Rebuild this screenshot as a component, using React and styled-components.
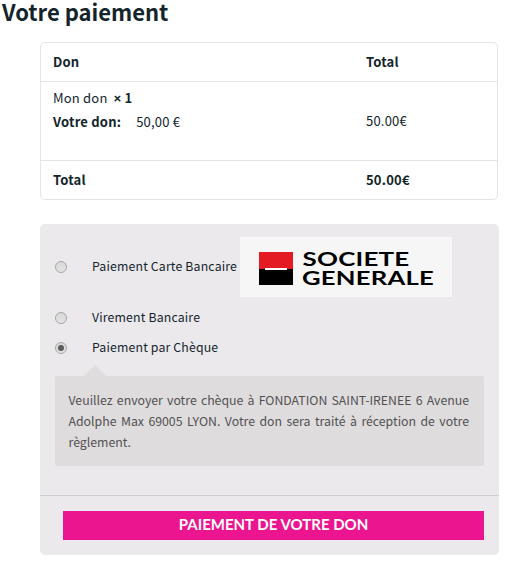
import React, { useState } from 'react'
import styled, { createGlobalStyle } from 'styled-components'

const GlobalStyle = createGlobalStyle`
  * {
    box-sizing: border-box;
  }
  body {
    margin: 0;
    background: #fff;
    color: #13242b;
    font-family: 'Noto Sans CJK SC', 'Noto Sans', sans-serif;
    font-size: 13px;
  }
`

const Page = styled.div`
  width: 507px;
  height: 563px;
`

const Title = styled.h3`
  height: 42px;
  margin: 0;
  padding-left: 2px;
  font-size: 22px;
  font-weight: bold;
  line-height: 22px;
`

const OrderTable = styled.div`
  width: 458px;
  height: 158px;
  margin: 0 0 24px 40px;
  border: 1px solid #e4e4e4;
  border-radius: 5px;
`

const OrderRow = styled.div`
  display: grid;
  grid-template-columns: 313px 1fr;
  align-items: center;
  height: ${props => props.$height}px;
  padding-left: 12px;
  border-top: ${props => (props.$first ? 'none' : '1px solid #e4e4e4')};
  font-weight: ${props => (props.$bold ? 'bold' : 'normal')};
  letter-spacing: 0.2px;
  line-height: 24px;
`

const Product = styled.div`
  height: 70px;
`

const ProductLine = styled.div`
  height: 24px;
`

const Quantity = styled.strong`
  margin-left: 6px;
`

const Times = styled.span`
  margin-right: 3px;
  font-family: Lato, sans-serif;
  font-size: 13.5px;
  font-weight: 900;
  line-height: 1;
`

const Amount = styled.span`
  margin-left: 15px;
`

const PaymentBox = styled.div`
  width: 459px;
  height: 331px;
  margin-left: 40px;
  border-radius: 5px;
  background: #ebe9eb;
`

const Methods = styled.div`
  height: 272px;
  padding: 13px 15px 0;
  border-bottom: 1px solid #d1ced3;
`

const Method = styled.label`
  display: flex;
  align-items: center;
  height: ${props => props.$height || 30}px;
  margin-bottom: ${props => props.$gap || 0}px;
  padding-bottom: ${props => (props.$height ? 0 : 2)}px;
  font-size: 12.3px;
  letter-spacing: 0.16px;
`

const MethodName = styled.span`
  margin-top: ${props => props.$raise || 0}px;
`

const Radio = styled.input`
  appearance: none;
  display: grid;
  place-items: center;
  flex: none;
  width: 12px;
  height: 12px;
  margin: ${props => (props.$raised ? '-1px' : '1px')} 25px 0 0;
  border: 1px solid #a6a6a6;
  border-radius: 50%;
  background: linear-gradient(#d9d9d9, #e4e4e4);
  &:checked::before {
    content: '';
    width: 6px;
    height: 6px;
    border-radius: 50%;
    background: #5b5b5b;
  }
`

const BankLogo = styled.svg`
  flex: none;
  margin-left: auto;
  margin-right: 32px;
`

const Message = styled.div`
  position: relative;
  height: 90px;
  margin-top: 13px;
  padding: 14px 15px 0 13.5px;
  border-radius: 2px;
  background: #dfdcde;
  color: #515151;
  font-size: 12.3px;
  line-height: 21px;
  text-align: justify;
  &::before {
    content: '';
    position: absolute;
    top: -11px;
    left: 29px;
    border: 11px solid transparent;
    border-top: 0;
    border-bottom-color: #dfdcde;
  }
`

const SubmitButton = styled.button`
  display: block;
  width: 421px;
  height: 29px;
  margin: 15px 0 0 23px;
  padding: 0 0 3px;
  border: 0;
  background: #eb168f;
  color: #fff;
  font-family: Lato, sans-serif;
  font-size: 15px;
  font-weight: bold;
`

function SocieteGenerale() {
  return (
    <BankLogo width="212" height="60" viewBox="0 0 212 60">
      <rect width="212" height="60" fill="#f6f6f6" />
      <rect x="19" y="15" width="34" height="17" fill="#e51b24" />
      <rect x="19" y="32" width="34" height="16" />
      <rect x="25" y="31" width="22" height="2" fill="#fff" />
      <g fontFamily="Lato, sans-serif" fontSize="18.8" fontWeight="700">
        <text x="62.5" y="29.3" textLength="107" lengthAdjust="spacingAndGlyphs">SOCIETE</text>
        <text x="62" y="47.8" textLength="132" lengthAdjust="spacingAndGlyphs">GENERALE</text>
      </g>
    </BankLogo>
  )
}

function App() {
  const [method, setMethod] = useState('cheque')

  const radio = (value, raised) => (
    <Radio
      type="radio"
      name="payment"
      $raised={raised}
      checked={method === value}
      onChange={() => setMethod(value)}
    />
  )

  return (
    <Page>
      <GlobalStyle />
      <Title>Votre paiement</Title>

      <OrderTable>
        <OrderRow $height={38} $first $bold>
          <span>Don</span>
          <span>Total</span>
        </OrderRow>
        <OrderRow $height={79}>
          <Product>
            <ProductLine>Mon don<Quantity><Times>×</Times>1</Quantity></ProductLine>
            <ProductLine><strong>Votre don:</strong><Amount>50,00 €</Amount></ProductLine>
          </Product>
          <span>50.00€</span>
        </OrderRow>
        <OrderRow $height={39} $bold>
          <span>Total</span>
          <span>50.00€</span>
        </OrderRow>
      </OrderTable>

      <PaymentBox>
        <Methods>
          <Method $height={60} $gap={6}>
            {radio('card', true)}
            <MethodName $raise={-2}>Paiement Carte Bancaire</MethodName>
            <SocieteGenerale />
          </Method>
          <Method>
            {radio('transfer')}
            <MethodName>Virement Bancaire</MethodName>
          </Method>
          <Method>
            {radio('cheque')}
            <MethodName>Paiement par Chèque</MethodName>
          </Method>
          <Message>
            Veuillez envoyer votre chèque à FONDATION SAINT-IRENEE 6 Avenue
            Adolphe Max 69005 LYON. Votre don sera traité à réception de votre
            règlement.
          </Message>
        </Methods>
        <SubmitButton>PAIEMENT DE VOTRE DON</SubmitButton>
      </PaymentBox>
    </Page>
  )
}

export default App
